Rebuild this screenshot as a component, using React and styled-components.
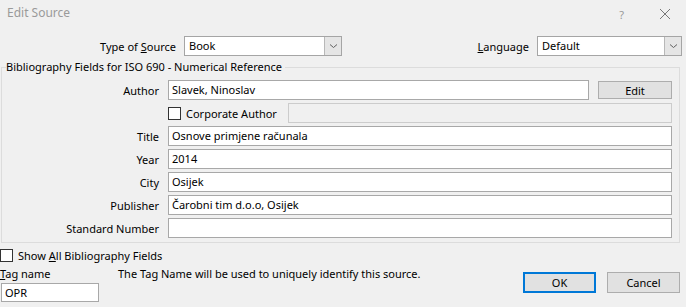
import { createGlobalStyle, styled } from 'styled-components';

const GlobalStyle = createGlobalStyle`
  * {
    margin: 0;
    padding: 0;
    box-sizing: border-box;
  }
  body {
    background: #f0f0f0;
    font-family: 'Noto Sans', 'Liberation Sans', sans-serif;
    font-size: 11px;
    color: #000;
  }
`;

const fields = [
  { label: 'Title', value: 'Osnove primjene računala' },
  { label: 'Year', value: '2014' },
  { label: 'City', value: 'Osijek' },
  { label: 'Publisher', value: 'Čarobni tim d.o.o, Osijek' },
  { label: 'Standard Number', value: '' },
];

function Combo({ value, width }) {
  return (
    <ComboBox $width={width}>
      <ComboText>{value}</ComboText>
      <ComboArrow>
        <svg width="9" height="6" viewBox="0 0 9 6">
          <path d="M1 1.5 L4.5 4.5 L8 1.5" fill="none" stroke="#606060" strokeWidth="1" />
        </svg>
      </ComboArrow>
    </ComboBox>
  );
}

function App() {
  return (
    <Dialog>
      <GlobalStyle />
      <TitleBar>
        <Caption>Edit Source</Caption>
        <TitleIcons>
          <Help>?</Help>
          <svg width="12" height="12" viewBox="0 0 12 12">
            <path d="M1 1 L11 11 M11 1 L1 11" stroke="#777" strokeWidth="1" />
          </svg>
        </TitleIcons>
      </TitleBar>

      <TopRow>
        <TopLabel $width={176}>Type of <u>S</u>ource</TopLabel>
        <Combo value="Book" width={158} />
        <Spacer />
        <TopLabel><u>L</u>anguage</TopLabel>
        <Combo value="Default" width={145} />
      </TopRow>

      <Group>
        <Legend>Bibliography Fields for ISO 690 - Numerical Reference</Legend>
        <FieldGrid>
          <FieldLabel>Author</FieldLabel>
          <AuthorRow>
            <TextBox>Slavek, Ninoslav</TextBox>
            <Button $width={74} $height={18}>Edit</Button>
          </AuthorRow>

          <span />
          <CorporateRow>
            <CheckLabel $width={120}>
              <Check />
              <span>Corporate Author</span>
            </CheckLabel>
            <TextBox $disabled />
          </CorporateRow>

          {fields.map((f) => (
            <FieldRow key={f.label}>
              <FieldLabel>{f.label}</FieldLabel>
              <TextBox>{f.value}</TextBox>
            </FieldRow>
          ))}
        </FieldGrid>
      </Group>

      <ShowAll>
        <CheckLabel>
          <Check />
          <span>Show <u>A</u>ll Bibliography Fields</span>
        </CheckLabel>
      </ShowAll>

      <Bottom>
        <TagBlock>
          <TagLine>
            <TagLabel><u>T</u>ag name</TagLabel>
            <span>The Tag Name will be used to uniquely identify this source.</span>
          </TagLine>
          <TagInput>OPR</TagInput>
        </TagBlock>
        <Buttons>
          <Button $width={73} $height={21} $default>OK</Button>
          <Button $width={73} $height={21}>Cancel</Button>
        </Buttons>
      </Bottom>
    </Dialog>
  );
}

const Dialog = styled.div`
  width: 686px;
  height: 307px;
  overflow: hidden;
`;

const TitleBar = styled.div`
  height: 36px;
  display: flex;
  align-items: flex-start;
  justify-content: space-between;
  padding: 5px 15px 0 7px;
`;

const Caption = styled.div`
  color: #9a9a9a;
  font-size: 12px;
  line-height: 16px;
`;

const TitleIcons = styled.div`
  display: flex;
  align-items: center;
  gap: 35px;
  height: 16px;
  margin-top: 1px;
`;

const Help = styled.span`
  color: #999;
  font-size: 11px;
`;

const TopRow = styled.div`
  display: flex;
  align-items: center;
  height: 20px;
  padding-right: 4px;
`;

const TopLabel = styled.div`
  width: ${(p) => (p.$width ? `${p.$width}px` : 'auto')};
  text-align: right;
  margin-right: 8px;
  white-space: nowrap;
`;

const Spacer = styled.div`
  flex: 1;
`;

const ComboBox = styled.div`
  width: ${(p) => p.$width}px;
  height: 20px;
  display: flex;
  background: #fff;
  border: 1px solid #a5a5a5;
`;

const ComboText = styled.div`
  flex: 1;
  padding-left: 4px;
  line-height: 18px;
`;

const ComboArrow = styled.div`
  width: 17px;
  background: #e5e5e5;
  border-left: 1px solid #b8b8b8;
  display: flex;
  align-items: center;
  justify-content: center;
`;

const Group = styled.fieldset`
  margin: 3px 6px 0 1px;
  border: 1px solid #dcdcdc;
  padding: 5px 7px 4px 4px;
`;

const Legend = styled.legend`
  padding: 0 3px 0 0;
  line-height: 16px;
`;

const FieldGrid = styled.div`
  display: grid;
  grid-template-columns: 153px 1fr;
  column-gap: 9px;
  row-gap: 3px;
  grid-auto-rows: 20px;
  align-items: center;
`;

const FieldRow = styled.div`
  display: contents;
`;

const FieldLabel = styled.div`
  text-align: right;
  white-space: nowrap;
`;

const AuthorRow = styled.div`
  display: flex;
  align-items: center;
  gap: 9px;
  height: 20px;
`;

const CorporateRow = styled.div`
  display: flex;
  align-items: center;
  height: 20px;
`;

const TextBox = styled.div`
  flex: 1;
  height: 20px;
  border: 1px solid ${(p) => (p.$disabled ? '#cccccc' : '#a8a8a8')};
  background: ${(p) => (p.$disabled ? '#f0f0f0' : '#fff')};
  padding-left: 3px;
  line-height: 18px;
  white-space: nowrap;
  overflow: hidden;
`;

const Button = styled.div`
  width: ${(p) => p.$width}px;
  height: ${(p) => p.$height}px;
  display: flex;
  align-items: center;
  justify-content: center;
  background: #e1e1e1;
  border: ${(p) => (p.$default ? '2px solid #0078d7' : '1px solid #adadad')};
`;

const CheckLabel = styled.label`
  width: ${(p) => (p.$width ? `${p.$width}px` : 'auto')};
  display: flex;
  align-items: center;
  gap: 5px;
  white-space: nowrap;
`;

const Check = styled.span`
  width: 13px;
  height: 13px;
  background: #fff;
  border: 1px solid #333;
`;

const ShowAll = styled.div`
  margin-top: 5px;
  height: 14px;
  display: flex;
  align-items: center;
`;

const Bottom = styled.div`
  display: flex;
  align-items: flex-start;
  padding: 3px 6px 0 1px;
`;

const TagBlock = styled.div`
  flex: 1;
`;

const TagLine = styled.div`
  display: flex;
  align-items: center;
  height: 16px;
`;

const TagLabel = styled.div`
  width: 118px;
  margin-left: -1px;
`;

const TagInput = styled.div`
  width: 98px;
  height: 19px;
  margin-top: 2px;
  background: #fff;
  border: 1px solid #a8a8a8;
  padding-left: 3px;
  line-height: 17px;
`;

const Buttons = styled.div`
  display: flex;
  gap: 11px;
  margin-top: 7px;
`;

export default App;
